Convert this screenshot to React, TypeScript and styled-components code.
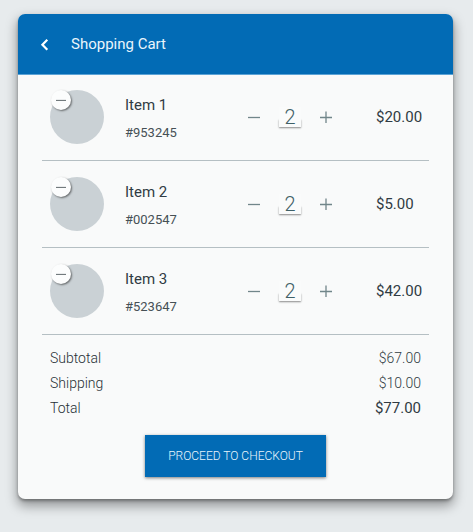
import React, { useState } from "react";
import styled, { createGlobalStyle } from "styled-components";

const GlobalStyle = createGlobalStyle`
  *, *::before, *::after { box-sizing: border-box; }
  body {
    margin: 0;
    background: #e7ebed;
    font-family: Roboto, sans-serif;
    color: #303b43;
  }
  button, input { font-family: inherit; }
`;

const Page = styled.main`
  padding: 14px 20px 32px 18px;
`;

const Card = styled.section`
  border-radius: 7px;
  background: #f9fafa;
  box-shadow: 0 6px 12px 1px rgba(0, 0, 0, 0.36), 0 2px 3px rgba(0, 0, 0, 0.3);
`;

const Header = styled.header`
  display: flex;
  align-items: center;
  gap: 17px;
  height: 60px;
  padding: 0 20px;
  border-radius: 7px 7px 0 0;
  background: #026bb5;
  color: #e9f5fc;
  box-shadow: 0 1px 0 #5ba3d6;
`;

const BackButton = styled.button`
  display: flex;
  padding: 2px 0 0;
  border: 0;
  background: none;
  color: #fff;
  cursor: pointer;
`;

const Title = styled.h1`
  margin: 0;
  font-size: 15px;
  font-weight: 400;
  line-height: 20px;
`;

const Items = styled.ul`
  margin: 0 24px;
  padding: 0;
  list-style: none;
`;

const ItemRow = styled.li`
  display: grid;
  grid-template-columns: 75px 1fr 84px 97px;
  align-items: center;
  height: 87px;
  padding-left: 8px;
  border-bottom: 1px solid #b5bfc3;
`;

const Thumbnail = styled.div`
  position: relative;
  width: 54px;
  height: 54px;
  border-radius: 50%;
  background: #cad1d5;
`;

const RemoveButton = styled.button`
  position: absolute;
  top: 0;
  left: 1px;
  display: flex;
  align-items: center;
  justify-content: center;
  width: 20px;
  height: 20px;
  padding: 0;
  border: 0;
  border-radius: 50%;
  background: #fcfdfd;
  color: #6c7578;
  box-shadow: 1px 1px 2px rgba(0, 0, 0, 0.5);
  cursor: pointer;
`;

const ItemText = styled.div`
  padding-top: 4px;
`;

const ItemName = styled.h2`
  margin: 0;
  font-size: 15px;
  font-weight: 400;
  line-height: 20px;
`;

const ItemCode = styled.p`
  margin: 8px 0 0;
  color: #465055;
  font-size: 13px;
  line-height: 20px;
`;

const Stepper = styled.div`
  display: flex;
  align-items: center;
  justify-content: space-between;
`;

const StepButton = styled.button`
  display: flex;
  padding: 0;
  border: 0;
  background: none;
  color: #71868a;
  cursor: pointer;
`;

const QuantityTray = styled.span`
  position: relative;
  display: flex;

  &::before {
    content: "";
    position: absolute;
    right: 0;
    bottom: 0;
    left: 0;
    height: 8px;
    box-shadow: 0 1px 2px rgba(0, 0, 0, 0.45);
  }
`;

const QuantityInput = styled.input`
  position: relative;
  width: 22px;
  height: 20px;
  padding: 0;
  border: 0;
  background: #fafbfb;
  color: #3f6067;
  font-size: 20px;
  font-weight: 300;
  line-height: 20px;
  text-align: center;
`;

const Price = styled.span`
  padding-left: 44px;
  font-size: 15px;
  line-height: 20px;
`;

const Summary = styled.dl`
  display: grid;
  grid-template-columns: 1fr auto;
  margin: 0;
  padding: 11px 32px 0;
  font-size: 14px;
  font-weight: 300;
  line-height: 25px;
`;

const SummaryLabel = styled.dt`
  color: #262f34;
`;

const SummaryValue = styled.dd<{ $strong?: boolean }>`
  margin: 0;
  font-size: ${({ $strong }) => ($strong ? "15px" : "14px")};
  font-weight: ${({ $strong }) => ($strong ? 400 : 300)};
  color: #303b43;
  text-align: right;
`;

const Footer = styled.footer`
  display: flex;
  justify-content: center;
  padding: 14px 0 22px;
`;

const CheckoutButton = styled.button`
  height: 42px;
  padding: 0 23px;
  border: 0;
  background: #026bb5;
  color: #e9f5fc;
  font-size: 12px;
  font-weight: 300;
  line-height: 20px;
  box-shadow: 0 1px 3px rgba(0, 0, 0, 0.5);
  cursor: pointer;
`;

const BackIcon = () => (
  <svg width="16" height="16" viewBox="0 0 16 16" fill="none" stroke="currentColor" strokeWidth="2.2" aria-hidden="true">
    <path d="M9.3 2.8 4.4 7.8l4.9 5" />
  </svg>
);

const MinusIcon = ({ size = 12 }: { size?: number }) => (
  <svg width={size} height={size} viewBox="0 0 12 12" fill="none" stroke="currentColor" strokeWidth="1.3" aria-hidden="true">
    <path d="M0 6.5h12" />
  </svg>
);

const PlusIcon = () => (
  <svg width="12" height="12" viewBox="0 0 12 12" fill="none" stroke="currentColor" strokeWidth="1.3" aria-hidden="true">
    <path d="M0 6.5h12M6 .5v12" />
  </svg>
);

const products = [
  { name: "Item 1", code: "#953245", price: "$20.00" },
  { name: "Item 2", code: "#002547", price: "$5.00" },
  { name: "Item 3", code: "#523647", price: "$42.00" },
];

type Product = (typeof products)[number];

function CartItem({ name, code, price }: Product) {
  const [quantity, setQuantity] = useState(2);
  return (
    <ItemRow>
      <Thumbnail>
        <RemoveButton type="button" aria-label={`Remove ${name}`}>
          <MinusIcon size={10} />
        </RemoveButton>
      </Thumbnail>
      <ItemText>
        <ItemName>{name}</ItemName>
        <ItemCode>{code}</ItemCode>
      </ItemText>
      <Stepper>
        <StepButton type="button" aria-label={`Fewer of ${name}`} onClick={() => setQuantity(Math.max(0, quantity - 1))}>
          <MinusIcon />
        </StepButton>
        <QuantityTray>
          <QuantityInput
            aria-label={`Quantity of ${name}`}
            inputMode="numeric"
            value={quantity}
            onChange={(event) => setQuantity(Number(event.target.value) || 0)}
          />
        </QuantityTray>
        <StepButton type="button" aria-label={`More of ${name}`} onClick={() => setQuantity(quantity + 1)}>
          <PlusIcon />
        </StepButton>
      </Stepper>
      <Price>{price}</Price>
    </ItemRow>
  );
}

export default function App() {
  return (
    <>
      <GlobalStyle />
      <Page>
        <Card>
          <Header>
            <BackButton type="button" aria-label="Back">
              <BackIcon />
            </BackButton>
            <Title>Shopping Cart</Title>
          </Header>
          <Items>
            {products.map((product) => (
              <CartItem key={product.name} {...product} />
            ))}
          </Items>
          <Summary>
            <SummaryLabel>Subtotal</SummaryLabel>
            <SummaryValue>$67.00</SummaryValue>
            <SummaryLabel>Shipping</SummaryLabel>
            <SummaryValue>$10.00</SummaryValue>
            <SummaryLabel>Total</SummaryLabel>
            <SummaryValue $strong>$77.00</SummaryValue>
          </Summary>
          <Footer>
            <CheckoutButton type="button">PROCEED TO CHECKOUT</CheckoutButton>
          </Footer>
        </Card>
      </Page>
    </>
  );
}
